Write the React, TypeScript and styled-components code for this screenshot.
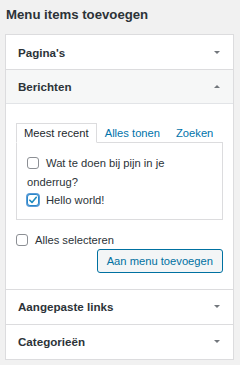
import React from "react";
import styled, { createGlobalStyle } from "styled-components";

const Global = createGlobalStyle`
  html, body { margin: 0; padding: 0; background: #f1f1f1; }
  body { font-family: "Liberation Sans", Arial, sans-serif; color: #23282d; font-size: 11.2px; }
  * { box-sizing: border-box; }
`;

const Page = styled.div`
  width: 240px;
  padding: 0 6px 0 5px;
`;

const Title = styled.h2`
  margin: 0;
  padding: 5px 0 0 1px;
  height: 34px;
  font-size: 13.2px;
  font-weight: 700;
  line-height: 19px;
  color: #2c3338;
`;

const Box = styled.div`
  border: 1px solid #dcdcde;
  background: #fff;
`;

const Section = styled.div<{ $last?: boolean }>`
  border-bottom: ${(p) => (p.$last ? "none" : "1px solid #dcdcde")};
`;

const Header = styled.div<{ $open?: boolean }>`
  height: 34px;
  display: flex;
  align-items: center;
  justify-content: space-between;
  padding: 0 13px 0 12px;
  font-size: 11.6px;
  font-weight: 700;
  color: #2c3338;
  background: ${(p) => (p.$open ? "#f6f7f7" : "#fff")};
  border-bottom: ${(p) => (p.$open ? "1px solid #e2e4e7" : "none")};
`;

const Arrow = styled.span<{ $up?: boolean }>`
  width: 0;
  height: 0;
  border-left: 3px solid transparent;
  border-right: 3px solid transparent;
  ${(p) =>
    p.$up
      ? "border-bottom: 3.5px solid #72777c;"
      : "border-top: 3.5px solid #72777c;"}
`;

const Content = styled.div`
  padding: 19px 10px 16px 10px;
`;

const Tabs = styled.div`
  display: flex;
  align-items: flex-end;
  position: relative;
  z-index: 1;
`;

const Tab = styled.span<{ $active?: boolean }>`
  flex: none;
  white-space: nowrap;
  height: 20px;
  line-height: 18px;
  padding: 0 7px;
  font-size: 11.2px;
  color: ${(p) => (p.$active ? "#23282d" : "#0073aa")};
  background: ${(p) => (p.$active ? "#fff" : "transparent")};
  border: 1px solid ${(p) => (p.$active ? "#dcdcde" : "transparent")};
  border-bottom: 1px solid ${(p) => (p.$active ? "#fff" : "transparent")};
`;

const Panel = styled.div`
  border: 1px solid #dcdcde;
  margin-top: -1px;
  padding: 11px 10px 9px 10px;
`;

const Item = styled.label`
  display: block;
  line-height: 18.5px;
  font-size: 11.2px;
  color: #2c3338;
`;

const Box12 = styled.span<{ $checked?: boolean }>`
  display: inline-block;
  width: 12px;
  height: 12px;
  margin-right: 7px;
  vertical-align: -2px;
  border: 1px solid ${(p) => (p.$checked ? "#2a86c7" : "#8c8f94")};
  border-radius: 3px;
  background: #fff;
  position: relative;
  box-shadow: ${(p) => (p.$checked ? "0 0 0 1px #5b9dd9" : "none")};
  svg { position: absolute; left: 0; top: 0; }
`;

const Footer = styled.div`
  margin-top: 12px;
  display: flex;
  flex-direction: column;
`;

const SelectAll = styled.label`
  line-height: 16px;
  font-size: 11.2px;
  color: #2c3338;
`;

const ButtonRow = styled.div`
  display: flex;
  justify-content: flex-end;
  margin-top: 1px;
`;

const Button = styled.button`
  height: 24px;
  padding: 0 9px;
  font-family: "Liberation Sans", Arial, sans-serif;
  font-size: 11.2px;
  color: #0071a1;
  background: #f3f5f6;
  border: 1px solid #0071a1;
  border-radius: 3px;
`;

const Check = () => (
  <svg width="10" height="10" viewBox="0 0 10 10">
    <path d="M1.8 5.2 L4 7.4 L8.3 2.3" fill="none" stroke="#1e8cbe" strokeWidth="1.6" strokeLinecap="round" strokeLinejoin="round" />
  </svg>
);

export default function App() {
  return (
    <>
      <Global />
      <Page>
        <Title>Menu items toevoegen</Title>
        <Box>
          <Section>
            <Header>
              <span>Pagina's</span>
              <Arrow />
            </Header>
          </Section>
          <Section>
            <Header $open>
              <span>Berichten</span>
              <Arrow $up />
            </Header>
            <Content>
              <Tabs>
                <Tab $active>Meest recent</Tab>
                <Tab>Alles tonen</Tab>
                <Tab>Zoeken</Tab>
              </Tabs>
              <Panel>
                <Item>
                  <Box12 />Wat te doen bij pijn in je onderrug?
                </Item>
                <Item>
                  <Box12 $checked>
                    <Check />
                  </Box12>
                  Hello world!
                </Item>
              </Panel>
              <Footer>
                <SelectAll>
                  <Box12 />Alles selecteren
                </SelectAll>
                <ButtonRow>
                  <Button>Aan menu toevoegen</Button>
                </ButtonRow>
              </Footer>
            </Content>
          </Section>
          <Section>
            <Header>
              <span>Aangepaste links</span>
              <Arrow />
            </Header>
          </Section>
          <Section $last>
            <Header>
              <span>Categorieën</span>
              <Arrow />
            </Header>
          </Section>
        </Box>
      </Page>
    </>
  );
}
